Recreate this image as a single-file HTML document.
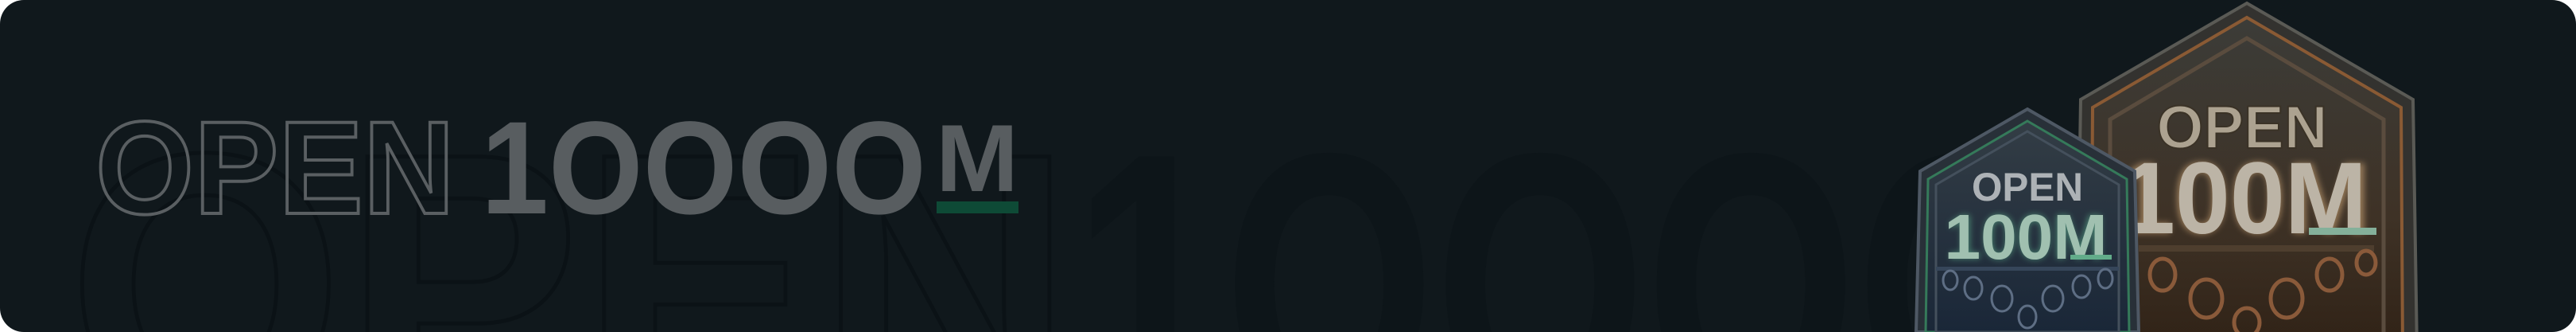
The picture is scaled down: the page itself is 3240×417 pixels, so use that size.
<!DOCTYPE html>
<html><head><meta charset="utf-8"><style>
html,body{margin:0;padding:0;background:#ffffff;}
.card{position:relative;width:3240px;height:417px;background:#10181c;border-radius:30px;overflow:hidden;font-family:"Liberation Sans",sans-serif;}
svg{position:absolute;left:0;top:0;display:block;}
</style></head><body>
<div class="card">
<svg width="3240" height="417" viewBox="0 0 3240 417" overflow="hidden">
<defs>
<linearGradient id="gb" x1="0" y1="0" x2="0" y2="1"><stop offset="0" stop-color="#333d45"/><stop offset="1" stop-color="#1a2738"/></linearGradient>
<linearGradient id="go" x1="0" y1="0" x2="0" y2="1"><stop offset="0" stop-color="#3c3c38"/><stop offset="0.6" stop-color="#3e3226"/><stop offset="1" stop-color="#302216"/></linearGradient>
<filter id="gl"><feGaussianBlur stdDeviation="4"/></filter>
<clipPath id="cp"><rect x="0" y="0" width="3240" height="417"/></clipPath>
</defs>
<g clip-path="url(#cp)">
<!-- ghost text -->
<text x="85" y="520" font-size="470" font-weight="bold" fill="none" stroke="#0b1216" stroke-width="5" textLength="1265" lengthAdjust="spacingAndGlyphs">OPEN</text>
<text x="1350" y="520" font-size="470" font-weight="bold" fill="#0d1519" textLength="1250" lengthAdjust="spacingAndGlyphs">1OOOO</text>
<!-- logo -->
<text x="120" y="268" font-size="166" font-weight="bold" fill="none" stroke="#5a5f62" stroke-width="4" textLength="452" lengthAdjust="spacingAndGlyphs">OPEN</text>
<text x="605" y="268" font-size="166" font-weight="bold" fill="#585d60" textLength="560" lengthAdjust="spacingAndGlyphs">1OOOO</text>
<text x="1177" y="240" font-size="120" font-weight="bold" fill="#585d60" textLength="104" lengthAdjust="spacingAndGlyphs">M</text>
<rect x="1178" y="253" width="103" height="15" fill="#0e4a36"/>
<!-- big orange badge -->
<g>
<polygon points="2826,4 3035,125 3040,440 2612,440 2617,125" fill="#33322f" stroke="#5a5a55" stroke-width="4"/>
<polygon points="2826,22 3020,135 3022,440 2630,440 2632,135" fill="url(#go)" stroke="#8a5a34" stroke-width="4"/>
<polygon points="2826,48 2998,150 2998,440 2654,440 2654,150" fill="none" stroke="#5a4c3e" stroke-width="5"/>
<text x="2820" y="186" font-size="76" font-weight="bold" fill="#aca290" text-anchor="middle" stroke="#3a3226" stroke-width="2" textLength="215" lengthAdjust="spacingAndGlyphs">OPEN</text>
<text x="2822" y="293" font-size="128" font-weight="bold" fill="#d0a878" text-anchor="middle" filter="url(#gl)" opacity="0.6">100M</text>
<text x="2822" y="293" font-size="128" font-weight="bold" fill="#bcb4a6" text-anchor="middle" textLength="310" lengthAdjust="spacingAndGlyphs">100M</text>
<rect x="2904" y="286" width="85" height="9" fill="#84b09a"/>
<rect x="2690" y="308" width="296" height="8" fill="#4e3e2e"/>
<g fill="none" stroke="#8a5a3a" stroke-width="5">
<ellipse cx="2720" cy="345" rx="16" ry="20"/><ellipse cx="2775" cy="375" rx="20" ry="24"/><ellipse cx="2876" cy="375" rx="20" ry="24"/><ellipse cx="2930" cy="345" rx="16" ry="20"/><ellipse cx="2976" cy="330" rx="12" ry="15"/><ellipse cx="2826" cy="405" rx="16" ry="18"/>
</g>
</g>
<!-- small blue badge -->
<g>
<ellipse cx="2470" cy="330" rx="60" ry="120" fill="#0c1317"/>
<polygon points="2550,137 2685,215 2690,417 2410,417 2415,215" fill="#283038" stroke="#4e5864" stroke-width="4"/>
<polygon points="2550,152 2675,225 2678,417 2422,417 2425,225" fill="url(#gb)" stroke="#357a5a" stroke-width="3"/>
<polygon points="2550,165 2665,232 2665,417 2435,417 2435,232" fill="none" stroke="#44505c" stroke-width="3"/>
<text x="2550" y="252" font-size="50" font-weight="bold" fill="#adb2b6" text-anchor="middle" textLength="140" lengthAdjust="spacingAndGlyphs">OPEN</text>
<text x="2548" y="325" font-size="80" font-weight="bold" fill="#6ad0a0" text-anchor="middle" filter="url(#gl)" opacity="0.5">100M</text>
<text x="2548" y="325" font-size="80" font-weight="bold" fill="#a0c0b0" text-anchor="middle" textLength="205" lengthAdjust="spacingAndGlyphs">100M</text>
<rect x="2604" y="320" width="52" height="6" fill="#62ac8a"/>
<rect x="2435" y="335" width="230" height="5" fill="#36465a"/>
<g fill="none" stroke="#5e6e84" stroke-width="3">
<ellipse cx="2453" cy="352" rx="9" ry="12"/><ellipse cx="2482" cy="362" rx="11" ry="14"/><ellipse cx="2518" cy="375" rx="13" ry="16"/><ellipse cx="2550" cy="398" rx="11" ry="14"/><ellipse cx="2582" cy="375" rx="13" ry="16"/><ellipse cx="2618" cy="360" rx="11" ry="14"/><ellipse cx="2648" cy="350" rx="9" ry="12"/>
</g>
</g>
</g>
</svg>
</div>
</body></html>
